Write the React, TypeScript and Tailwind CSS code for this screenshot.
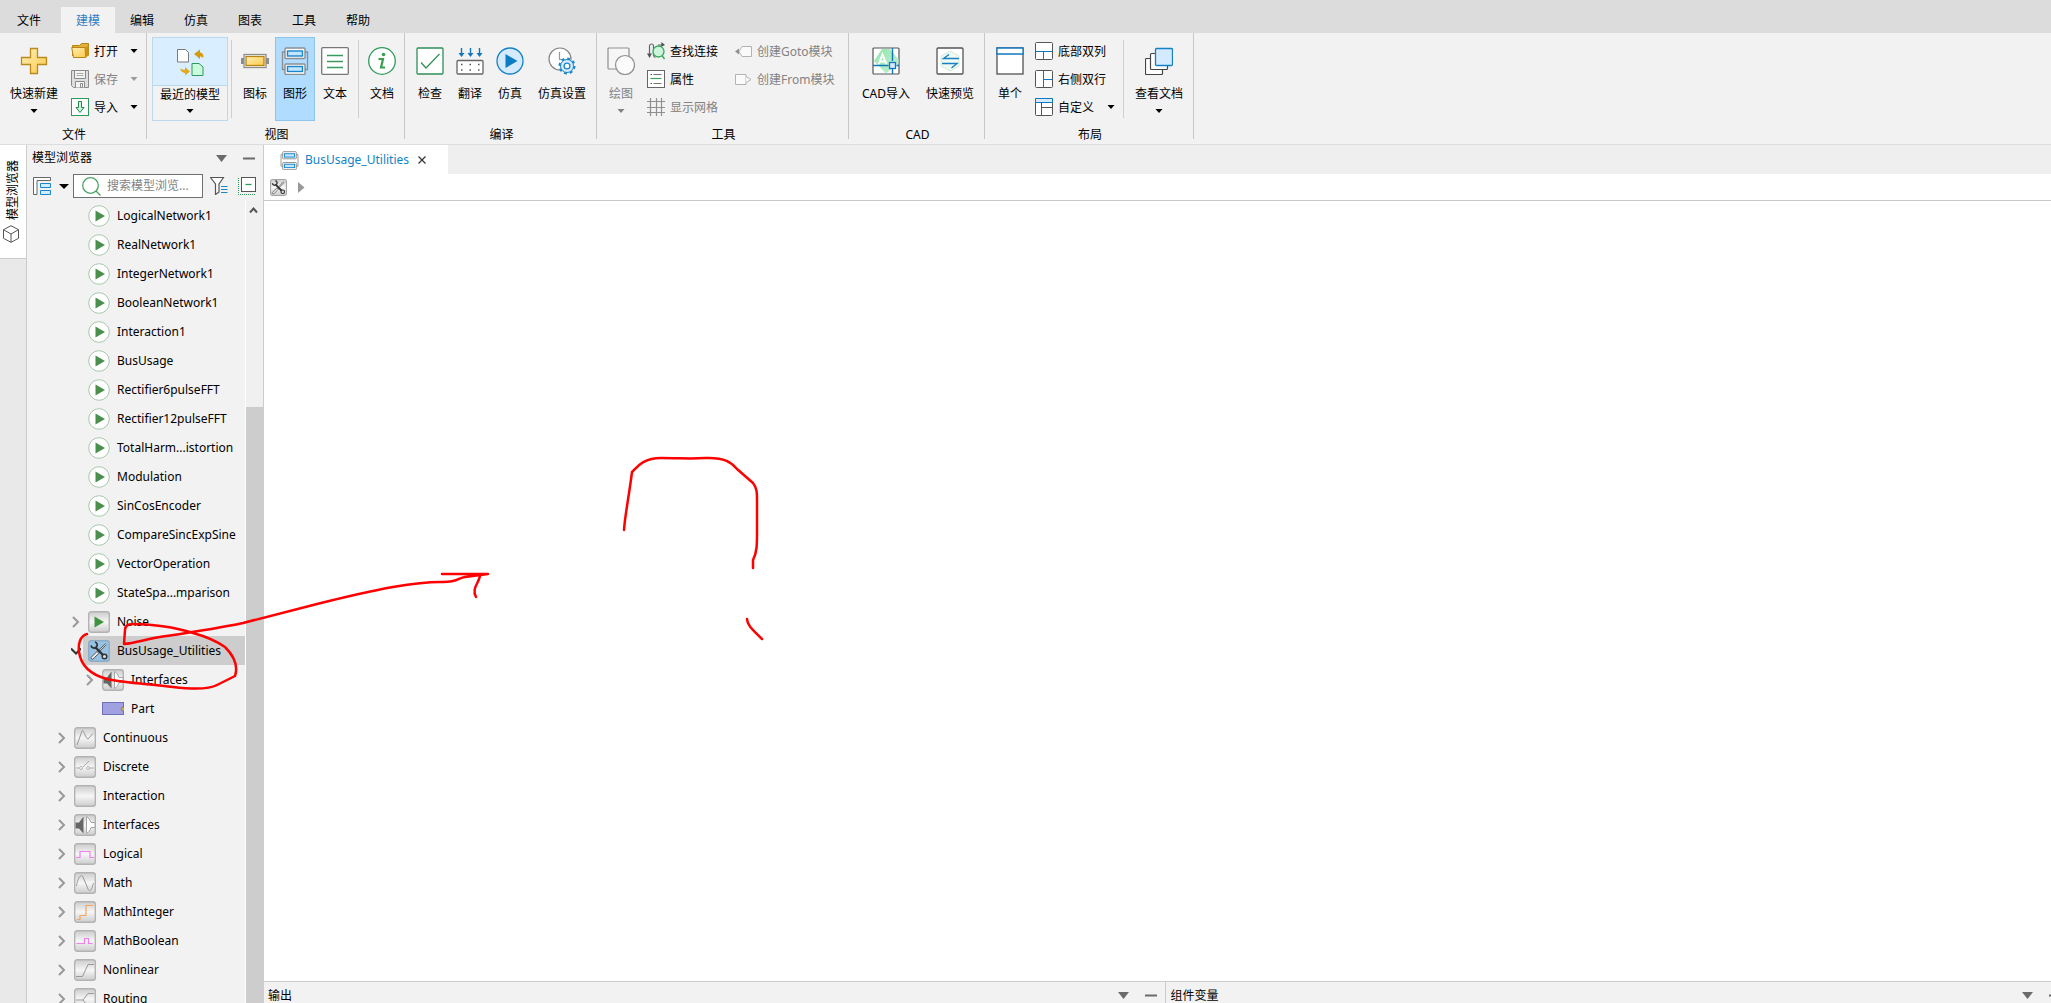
import type { ReactNode } from 'react'

const menus = ['编辑', '仿真', '图表', '工具', '帮助']

type Node = {
  name: string
  level: number
  icon: string
  toggle?: 'open' | 'closed'
  selected?: boolean
}

const examples = [
  'LogicalNetwork1',
  'RealNetwork1',
  'IntegerNetwork1',
  'BooleanNetwork1',
  'Interaction1',
  'BusUsage',
  'Rectifier6pulseFFT',
  'Rectifier12pulseFFT',
  'TotalHarm...istortion',
  'Modulation',
  'SinCosEncoder',
  'CompareSincExpSine',
  'VectorOperation',
  'StateSpa...mparison',
]

const nodes: Node[] = [
  ...examples.map((name) => ({ name, level: 2, icon: 'play' })),
  { name: 'Noise', level: 2, icon: 'playBox', toggle: 'closed' },
  { name: 'BusUsage_Utilities', level: 2, icon: 'tools', toggle: 'open', selected: true },
  { name: 'Interfaces', level: 3, icon: 'interfaces', toggle: 'closed' },
  { name: 'Part', level: 3, icon: 'part' },
  { name: 'Continuous', level: 1, icon: 'continuous', toggle: 'closed' },
  { name: 'Discrete', level: 1, icon: 'discrete', toggle: 'closed' },
  { name: 'Interaction', level: 1, icon: 'blank', toggle: 'closed' },
  { name: 'Interfaces', level: 1, icon: 'interfaces', toggle: 'closed' },
  { name: 'Logical', level: 1, icon: 'logical', toggle: 'closed' },
  { name: 'Math', level: 1, icon: 'math', toggle: 'closed' },
  { name: 'MathInteger', level: 1, icon: 'integer', toggle: 'closed' },
  { name: 'MathBoolean', level: 1, icon: 'boolean', toggle: 'closed' },
  { name: 'Nonlinear', level: 1, icon: 'nonlinear', toggle: 'closed' },
  { name: 'Routing', level: 1, icon: 'routing', toggle: 'closed' },
]

const indent: Record<number, string> = { 1: 'pl-[28px]', 2: 'pl-[42px]', 3: 'pl-[56px]' }

/* ---------- small shared pieces ---------- */

function Caret({ className = 'text-black' }: { className?: string }) {
  return (
    <svg width="8" height="4" viewBox="0 0 8 4" className={`shrink-0 ${className}`}>
      <path d="M0.5 0h7L4 4z" fill="currentColor" />
    </svg>
  )
}

function PanelTools() {
  return (
    <div className="flex items-center gap-4 text-[#6b6b6b]">
      <button aria-label="菜单">
        <svg width="11" height="7" viewBox="0 0 11 7"><path d="M0 0h11L5.5 7z" fill="currentColor" /></svg>
      </button>
      <button aria-label="隐藏">
        <svg width="12" height="7" viewBox="0 0 12 7"><path d="M0 2.5h12v2H0z" fill="currentColor" /></svg>
      </button>
    </div>
  )
}

function Svg({ size = 28, children }: { size?: number; children: ReactNode }) {
  return (
    <svg width={size} height={size} viewBox={`0 0 ${size} ${size}`} fill="none" className="shrink-0">
      {children}
    </svg>
  )
}

/* ---------- ribbon ---------- */

function Group({ title, children }: { title: string; children: ReactNode }) {
  return (
    <section className="flex h-[106px] shrink-0 flex-col border-r border-[#c8c8c8] pl-1 pr-0.5 pt-1">
      <div className="flex h-[84px] shrink-0">{children}</div>
      <h2 className="shrink-0 pt-[6px] text-center leading-4">{title}</h2>
    </section>
  )
}

type BigProps = {
  label: string
  icon: ReactNode
  width?: string
  caret?: boolean
  active?: boolean
  disabled?: boolean
}

function Big({ label, icon, width = 'w-10', caret, active, disabled }: BigProps) {
  return (
    <button
      disabled={disabled}
      className={`flex h-full ${width} flex-col items-center border pt-[9px] ${
        active ? 'border-[#8ec5ee] bg-[#b0dcff]' : 'border-transparent'
      } ${disabled ? 'text-[#838383]' : ''}`}
    >
      {icon}
      <span className="mt-[9px] whitespace-nowrap leading-5">{label}</span>
      {caret && <span className="pt-[5px]"><Caret className={disabled ? 'text-[#838383]' : 'text-black'} /></span>}
    </button>
  )
}

function Small({ label, icon, caret, disabled }: BigProps) {
  return (
    <button
      disabled={disabled}
      className={`flex h-7 items-center gap-[5px] ${disabled ? 'text-[#838383]' : ''}`}
    >
      {icon}
      <span className="whitespace-nowrap pt-[2px]">{label}</span>
      {caret && <span className="ml-auto"><Caret className={disabled ? 'text-[#9a9a9a]' : 'text-black'} /></span>}
    </button>
  )
}

function Rule() {
  return <div className="mx-[3px] my-[3px] w-px bg-[#cfcfcf]" />
}

function Gradients() {
  return (
    <svg width="0" height="0" className="absolute">
      <defs>
        <linearGradient id="gold" x1="0" y1="0" x2="1" y2="1">
          <stop offset="0" stopColor="#fff0b8" />
          <stop offset="1" stopColor="#fcc94c" />
        </linearGradient>
        <linearGradient id="steel" x1="0" y1="0" x2="0" y2="1">
          <stop offset="0" stopColor="#cccccc" />
          <stop offset="0.5" stopColor="#f6f6f6" />
          <stop offset="1" stopColor="#cccccc" />
        </linearGradient>
        <linearGradient id="leaf" x1="0" y1="0" x2="1" y2="1">
          <stop offset="0" stopColor="#8fe6ac" />
          <stop offset="1" stopColor="#c5f0d3" />
        </linearGradient>
      </defs>
    </svg>
  )
}

const PlusIcon = () => (
  <Svg>
    <path d="M10.5 1.5h7v9h9v7h-9v9h-7v-9h-9v-7h9z" fill="url(#gold)" stroke="#b98a1c" strokeWidth="1.3" />
  </Svg>
)

const FolderIcon = () => (
  <Svg size={18}>
    <path d="M1.500 14V3.500h7l2-2h7v12" fill="#e0b03a" stroke="#b98412" />
    <path d="M.7 5.500h13.300l.8 10H2.500z" fill="url(#gold)" stroke="#b98412" />
    <path d="M14.500 5.500 17.500 3v10.500l-2.500 2z" fill="#c89418" />
  </Svg>
)

const SaveIcon = () => (
  <Svg size={18}>
    <path d="M.5.5h17v17h-15l-2-2z" fill="#dedede" stroke="#8a8a8a" />
    <path d="M3.500.500h11v8h-11zM4.500 17.500v-6h9v6" fill="#f4f4f4" stroke="#8a8a8a" />
    <path d="M5.500 3.500h7M5.500 5.500h7" stroke="#aaa" />
    <path d="M9.500 13.500h2v4h-2z" stroke="#8a8a8a" fill="#fff" />
  </Svg>
)

const ImportIcon = () => (
  <Svg size={18}>
    <rect x=".5" y=".5" width="17" height="17" fill="#fff" stroke="#2f9a5b" />
    <path d="M7.500 3.500h3v6h2.500l-4 5-4-5h2.500z" fill="#c9f2d9" stroke="#23884c" />
  </Svg>
)

const RecentIcon = () => (
  <Svg>
    <path d="M1.500 1.500h8l3 3v9.500h-11z" fill="#fff" stroke="#7a7a7a" />
    <path d="M16 15.500h7l4 3.500v8.500H16z" fill="#c9fbdc" stroke="#2f9a5b" />
    <path d="M18 6l6-4.500v3c3 .5 4 3 3 5.500-1-1.500-2-1.500-3-1.500V11z" fill="#d69a0e" />
    <path d="M14 23.500l-5 4v-2.500c-3-.5-5-2.500-4.500-5 1 1.500 2.500 1.800 4.500 1.800V19z" fill="#e5a91a" />
  </Svg>
)

const SymbolIcon = () => (
  <Svg>
    <path d="M0 11h4v6H0zM24 11h4v6h-4z" fill="#8d8d8d" />
    <rect x="3" y="7.500" width="22" height="13" fill="#fff" stroke="#8d8d8d" strokeWidth="1.300" />
    <rect x="5" y="9.500" width="18" height="9" fill="url(#gold)" stroke="#b98412" strokeWidth="1.300" />
  </Svg>
)

function DiagramIcon({ size = 28 }: { size?: number }) {
  return (
    <svg width={size} height={size} viewBox="0 0 28 28" fill="none" className="shrink-0">
      <path d="M5 5H1.500v17.500H5M23 5h3.500v17.500H23" stroke="#8d8d8d" strokeWidth="1.300" />
      <rect x="4" y="1" width="20" height="10.500" rx="1" fill="#fff" stroke="#8d8d8d" strokeWidth="1.400" />
      <rect x="4" y="17" width="20" height="10.500" rx="1" fill="#fff" stroke="#8d8d8d" strokeWidth="1.400" />
      <rect x="6.500" y="4" width="15" height="5" fill="#c4e5ff" stroke="#1787c9" strokeWidth="1.400" />
      <rect x="6.500" y="19.500" width="15" height="5" fill="#c4e5ff" stroke="#1787c9" strokeWidth="1.400" />
    </svg>
  )
}

const TextIcon = () => (
  <Svg>
    <rect x=".7" y=".7" width="26.600" height="26.600" rx="1" fill="#fff" stroke="#777" strokeWidth="1.300" />
    <path d="M6 8.500h16M6 14.500h16M6 20.500h16" stroke="#3a9a5e" strokeWidth="1.300" />
  </Svg>
)

const InfoIcon = () => (
  <Svg>
    <circle cx="14" cy="14" r="13.300" fill="#fff" stroke="#2f9a5b" strokeWidth="1.300" />
    <circle cx="15.500" cy="7.500" r="1.800" fill="#38a04f" />
    <path d="M10.500 12h4.500l-2 8.500h4" stroke="#38a04f" strokeWidth="2.200" />
  </Svg>
)

const CheckIcon = () => (
  <Svg>
    <rect x="1" y="1" width="26" height="26" rx="1" fill="#fff" stroke="#2f8f57" strokeWidth="1.300" />
    <path d="M5 15.500l5 5.500L23.500 7" stroke="#2f8f57" strokeWidth="1.200" />
  </Svg>
)

const TranslateIcon = () => (
  <Svg>
    <path d="M5.500 1v7M14.500 1v7M23.500 1v7" stroke="#1377bd" strokeWidth="1.400" />
    <path d="M2.500 6h6l-3 4zM11.500 6h6l-3 4zM20.500 6h6l-3 4z" fill="#1377bd" />
    <rect x="1" y="13.500" width="26" height="13.500" rx="1" fill="#fff" stroke="#666" strokeWidth="1.300" />
    <path d="M5 17.500h1.500M13.500 17.500h1.500M22 17.500h1.500M5 23h1.500M13.500 23h1.500M22 23h1.500" stroke="#555" strokeWidth="1.500" />
  </Svg>
)

const SimulateIcon = () => (
  <Svg>
    <circle cx="14" cy="14" r="13" fill="#d3eaff" stroke="#1680c4" strokeWidth="1.300" />
    <path d="M9.500 7v14l12-7z" fill="#0b7cc2" />
  </Svg>
)

const SettingsIcon = () => (
  <Svg>
    <circle cx="12" cy="12" r="11" fill="#fff" stroke="#888" strokeWidth="1.200" />
    <path d="M11.500 5v7.500h4" stroke="#999" strokeWidth="1.200" />
    <circle cx="19" cy="19" r="7" fill="#d3eaff" stroke="#1e86c8" strokeWidth="3" strokeDasharray="2.750 2.750" />
    <circle cx="19" cy="19" r="6.500" fill="#d3eaff" stroke="#1e86c8" strokeWidth="1" />
    <circle cx="19" cy="19" r="2.900" fill="#fff" stroke="#1e86c8" strokeWidth="1.300" />
  </Svg>
)

const ShapesIcon = () => (
  <Svg>
    <rect x="1" y="1" width="21" height="21" rx="1" fill="#f6f6f6" stroke="#8f8f8f" strokeWidth="1.200" />
    <circle cx="18" cy="18" r="9.500" fill="#fbfbfb" stroke="#8f8f8f" strokeWidth="1.200" />
  </Svg>
)

const FindIcon = () => (
  <Svg size={18}>
    <path d="M2.500 13V4a2 2 0 0 1 4 0v9a3 3 0 0 0 2 2.500M11 3h4" stroke="#666" strokeWidth="1.200" />
    <path d="M0 11.500h5L2.500 16zM14.500 0l3.500 3-4 2z" fill="#555" />
    <circle cx="11.500" cy="9.500" r="5.500" fill="#ccf5da" stroke="#36a85f" strokeWidth="1.300" />
    <path d="M15 13.500l2.500 3.500" stroke="#36a85f" strokeWidth="1.300" />
  </Svg>
)

const PropsIcon = () => (
  <Svg size={18}>
    <rect x=".5" y=".5" width="17" height="17" fill="#fff" stroke="#666" />
    <path d="M6.500 4.500h8M6.500 13.500h8" stroke="#777" />
    <path d="M3.500 4.500h1.500M3.500 13.500h1.500" stroke="#555" />
    <path d="M3.500 8.500h11" stroke="#3aa35f" strokeWidth="1.200" />
  </Svg>
)

const GridIcon = () => (
  <Svg size={18}>
    <path d="M3.500 0v18M9.500 0v18M14.500 0v18M0 3.500h18M0 9.500h18M0 14.500h18" stroke="#8f8f8f" strokeWidth="1.200" />
  </Svg>
)

const GotoIcon = () => (
  <Svg size={17}>
    <path d="M7 3.500h9.500v10H7L4 8.500z" fill="#fafafa" stroke="#b3b3b3" />
    <path d="M0 8.500 4 5.500v6z" fill="#8f8f8f" />
  </Svg>
)

const FromIcon = () => (
  <Svg size={17}>
    <path d="M.5 3.500H11v10H.5z" fill="#fafafa" stroke="#b3b3b3" />
    <path d="M11 5.500l5 3-5 3" fill="#fafafa" stroke="#b3b3b3" />
  </Svg>
)

const CadIcon = () => (
  <Svg>
    <rect x="1" y="1" width="26" height="26" rx="1" fill="#fff" stroke="#555" strokeWidth="1.200" />
    <path d="M10 2h8l8.500 10.500v4L14 26.500 2 14z" fill="url(#leaf)" />
    <path d="M6.500 17.500l4-10 4 10M8 14.500h5" stroke="#fff" strokeWidth="2" />
    <path d="M20.500 1v13M20.500 22v5M1 18.500h15.500M24.500 18.500H27" stroke="#1377bd" strokeWidth="1.400" />
    <rect x="17.500" y="15.500" width="6" height="6" fill="#d3eaff" stroke="#1377bd" strokeWidth="1.300" />
  </Svg>
)

const PreviewIcon = () => (
  <Svg>
    <rect x="1" y="1" width="26" height="26" rx="1" fill="#fff" stroke="#555" strokeWidth="1.300" />
    <path d="M14 4l9 5v10l-9 5-9-5V9z" fill="#effaf2" stroke="#d4ecdb" />
    <path d="M23 11.500H7.500l5.500-4M6 16.500h15l-5.500 4.500" stroke="#1680c4" strokeWidth="1.400" />
  </Svg>
)

const SingleIcon = () => (
  <Svg>
    <rect x="1" y="1" width="26" height="26" fill="#fff" stroke="#444" strokeWidth="1.200" />
    <path d="M1 7V1h26v6z" fill="#fff" stroke="#1377bd" strokeWidth="1.300" />
  </Svg>
)

const BottomIcon = () => (
  <Svg size={18}>
    <rect x=".5" y=".5" width="17" height="17" rx="1" fill="#fff" stroke="#555" />
    <path d="M.5 9.500h17M8.500 9.500v8" stroke="#1377bd" />
  </Svg>
)

const RightIcon = () => (
  <Svg size={18}>
    <rect x=".5" y=".5" width="17" height="17" rx="1" fill="#fff" stroke="#555" />
    <path d="M8.500 .5v17M8.500 9.500h9" stroke="#1377bd" />
  </Svg>
)

const CustomIcon = () => (
  <Svg size={18}>
    <rect x=".5" y=".5" width="17" height="17" rx="1" fill="#fff" stroke="#555" />
    <path d="M6.500 5v12.500M6.500 9.500h11" stroke="#555" />
    <path d="M.5.5h17v4H.5z" fill="#d3eaff" stroke="#1377bd" />
  </Svg>
)

const DocsIcon = () => (
  <Svg>
    <rect x=".5" y="11.500" width="17" height="16" rx="1" fill="#fff" stroke="#444" strokeWidth="1.200" />
    <rect x="5.500" y="6.500" width="17" height="16" rx="1" fill="#fff" stroke="#444" strokeWidth="1.200" />
    <rect x="10.500" y="1.500" width="17" height="17" rx="1" fill="#d3eaff" stroke="#1680c4" strokeWidth="1.300" />
  </Svg>
)

function Ribbon() {
  return (
    <div className="flex h-[112px] shrink-0 border-b border-[#dddddd] bg-[#f2f2f2]">
      <Group title="文件">
        <Big label="快速新建" width="w-[60px]" icon={<PlusIcon />} caret />
        <div className="ml-[7px] mr-[6px] flex w-[67px] flex-col">
          <Small label="打开" icon={<FolderIcon />} caret />
          <Small label="保存" icon={<SaveIcon />} caret disabled />
          <Small label="导入" icon={<ImportIcon />} caret />
        </div>
      </Group>

      <Group title="视图">
        <button className="ml-px flex w-[76px] flex-col border border-[#bcd8ec]">
          <span className="flex h-12 w-full items-center justify-center border-b border-[#bcd8ec] bg-[#d9eeff]">
            <RecentIcon />
          </span>
          <span className="flex w-full flex-col items-center whitespace-nowrap pt-px leading-4">
            最近的模型
            <span className="pt-[6px]"><Caret /></span>
          </span>
        </button>
        <Rule />
        <Big label="图标" icon={<SymbolIcon />} />
        <Big label="图形" icon={<DiagramIcon />} active />
        <Big label="文本" icon={<TextIcon />} />
        <Rule />
        <Big label="文档" icon={<InfoIcon />} />
      </Group>

      <Group title="编译">
        <div className="w-px" />
        <Big label="检查" icon={<CheckIcon />} />
        <Big label="翻译" icon={<TranslateIcon />} />
        <Big label="仿真" icon={<SimulateIcon />} />
        <Big label="仿真设置" width="w-16" icon={<SettingsIcon />} />
      </Group>

      <Group title="工具">
        <Big label="绘图" icon={<ShapesIcon />} caret disabled />
        <div className="ml-[6px] flex w-[88px] flex-col">
          <Small label="查找连接" icon={<FindIcon />} />
          <Small label="属性" icon={<PropsIcon />} />
          <Small label="显示网格" icon={<GridIcon />} disabled />
        </div>
        <div className="flex w-[111px] flex-col">
          <Small label="创建Goto模块" icon={<GotoIcon />} disabled />
          <Small label="创建From模块" icon={<FromIcon />} disabled />
        </div>
      </Group>

      <Group title="CAD">
        <div className="w-px" />
        <Big label="CAD导入" width="w-16" icon={<CadIcon />} />
        <Big label="快速预览" width="w-16" icon={<PreviewIcon />} />
      </Group>

      <Group title="布局">
        <div className="w-px" />
        <Big label="单个" icon={<SingleIcon />} />
        <div className="mx-[5px] flex w-20 flex-col">
          <Small label="底部双列" icon={<BottomIcon />} />
          <Small label="右侧双行" icon={<RightIcon />} />
          <Small label="自定义" icon={<CustomIcon />} caret />
        </div>
        <Rule />
        <Big label="查看文档" width="w-16" icon={<DocsIcon />} caret />
      </Group>
    </div>
  )
}

/* ---------- model browser ---------- */

/* crossed spanner and screwdriver */
const Tools = () => (
  <>
    <path d="M10.500 11.500 18 4" stroke="#555" strokeWidth="1.800" />
    <path d="M11 11 18 4" stroke="#fff" strokeWidth=".7" />
    <path d="M3 17.500l6-6 1.800 1.800-6 6q-1.500.5-1.800-1.800z" fill="#eee" stroke="#444" strokeWidth=".9" />
    <path d="M7 7l8.500 8.500" stroke="#333" strokeWidth="2.400" />
    <path d="M3 5.500a3.200 3.200 0 0 0 5.500 1.500 3.200 3.200 0 0 0-1.500-5" stroke="#333" strokeWidth="1.700" />
    <circle cx="16.500" cy="16.500" r="2.300" fill="#d5e2ec" stroke="#333" strokeWidth="1.500" />
  </>
)

const glyphs: Record<string, ReactNode> = {
  blank: null,
  playBox: <path d="M6.500 5.500v11l9.500-5.500z" fill="#3f9440" />,
  tools: <Tools />,
  interfaces: (
    <>
      <path d="M1.500 8.500H5l4.500-6v17L5 14.500H1.500z" fill="#666" />
      <path d="M12.500 2.500c2 1 3.500 3.500 4.500 6h4v5h-4c-1 3-2.500 5-4.500 6z" fill="#fff" stroke="#a5a5a5" />
    </>
  ),
  continuous: <path d="M3 18 8 4c1-2 2 2 4.500 7l1.500 1 5-5.500" stroke="#999" />,
  discrete: <path d="M2 12h3M9 11l6-6M15 12h5M7 10.500a1.500 1.500 0 1 0 .1 0M14 10.500a1.500 1.500 0 1 0 .1 0" stroke="#aaa" />,
  logical: <path d="M2 14.500h4v-6h10v6h4" stroke="#f280f0" strokeWidth="1.200" />,
  math: <path d="M2.500 14C4 4 7.500 2 9 5l5 12c2 4 4 0 5.500-6" stroke="#999" />,
  integer: <path d="M3 18.500h3v-4h6v-10h7" stroke="#f0a860" strokeWidth="1.200" />,
  boolean: <path d="M2.500 13.500h8v-5h4v5h4" stroke="#f280f0" strokeWidth="1.200" />,
  nonlinear: <path d="M2 17.500h6.500L14 5.500h6" stroke="#999" />,
  routing: <path d="M2 12h7l5-6.500h6M9 12l5 6.500h6" stroke="#999" />,
}

function NodeIcon({ icon, blue }: { icon: string; blue?: boolean }) {
  if (icon === 'play') {
    return (
      <Svg size={22}>
        <circle cx="11" cy="11" r="10.300" fill="#fff" stroke="#a9c9ad" />
        <path d="M7.500 5.500v11l9.500-5.500z" fill="#4a8f4c" />
      </Svg>
    )
  }
  if (icon === 'part') {
    return (
      <Svg size={22}>
        <rect x=".5" y="4.500" width="21" height="12" fill="#a1a1e2" stroke="#6f6fbb" />
        <circle cx="21" cy="11" r="2" fill="#c9a94f" stroke="#777" strokeWidth=".7" />
      </Svg>
    )
  }
  return (
    <Svg size={22}>
      <rect x=".7" y=".7" width="20.600" height="20.600" rx="2.500" fill={blue ? '#97c2e3' : 'url(#steel)'} stroke={blue ? '#8cabc4' : '#b3b3b3'} strokeWidth="1.400" />
      {glyphs[icon]}
    </Svg>
  )
}

function TreeRow({ node }: { node: Node }) {
  return (
    <li className={`flex h-[29px] items-center ${indent[node.level]}`}>
      <span className="flex w-[14px] shrink-0 justify-center">
        {node.toggle && (
          <button aria-label={node.name}>
            <svg width="10" height="12" viewBox="0 0 10 12" fill="none">
              {node.toggle === 'open' ? (
                <path d="M0 3.500l5 5 5-5" stroke="#333" strokeWidth="2" />
              ) : (
                <path d="M2 1l5 5-5 5" stroke="#999" strokeWidth="2" />
              )}
            </svg>
          </button>
        )}
      </span>
      <button className={`flex h-full flex-1 items-center gap-[7px] pl-[5px] text-left ${node.selected ? 'bg-[#cdcdcd]' : ''}`}>
        <NodeIcon icon={node.icon} blue={node.selected} />
        <span className="whitespace-nowrap">{node.name}</span>
      </button>
    </li>
  )
}

function Browser() {
  return (
    <aside className="flex w-[238px] shrink-0 flex-col border-x border-[#cccccc] bg-[#f2f2f2]">
      <header className="flex h-[26px] shrink-0 items-center justify-between pl-[5px] pr-2">
        <h2>模型浏览器</h2>
        <PanelTools />
      </header>

      <div className="flex h-[30px] shrink-0 items-center pl-[6px]">
        <button aria-label="视图" className="flex items-center gap-2">
          <Svg size={18}>
            <path d="M.5.5h17v3H4v14H.5z" fill="#fff" stroke="#666" />
            <path d="M7.500 6.500h10v4h-10zM7.500 13.500h10v4h-10z" fill="#d3eaff" stroke="#1787c9" />
          </Svg>
          <svg width="10" height="5" viewBox="0 0 10 5"><path d="M0 0h10L5 5z" /></svg>
        </button>
        <label className="ml-1 flex h-6 w-[130px] items-center border border-[#707070] bg-white pl-2">
          <Svg size={19}>
            <circle cx="8.500" cy="8.500" r="7.800" stroke="#4ba267" strokeWidth="1.300" />
            <path d="M14 14l4.500 4.500" stroke="#4ba267" strokeWidth="1.300" />
          </Svg>
          <input
            aria-label="搜索"
            placeholder="搜索模型浏览..."
            className="ml-[6px] w-[92px] outline-none placeholder:text-[#838383]"
          />
        </label>
        <button aria-label="过滤" className="ml-[7px]">
          <Svg size={18}>
            <path d="M.5.500h13L9 7v8l-3.500 2.500V7z" fill="#fff" stroke="#555" strokeWidth="1.200" />
            <path d="M11 9.500h6.500M11 12.500h6.500M11 15.500h6.500" stroke="#1787c9" />
          </Svg>
        </button>
        <button aria-label="全部折叠" className="ml-[10px]">
          <Svg size={18}>
            <path d="M.5 1v16.500H18" stroke="#2f9a5b" strokeDasharray="1 1" />
            <rect x="3.500" y=".5" width="14" height="14" fill="#fff" stroke="#555" />
            <path d="M7.500 7.500h6" stroke="#2f9a5b" strokeWidth="1.300" />
          </Svg>
        </button>
      </div>

      <div className="flex min-h-0 flex-1">
        <ul className="min-w-0 flex-1 overflow-hidden">
          {nodes.map((n, i) => (
            <TreeRow key={i} node={n} />
          ))}
        </ul>
        {/* scrollbar */}
        <div className="flex w-[18px] flex-col border-l border-white bg-[#f0f0f0]">
          <svg width="17" height="17" viewBox="0 0 17 17" fill="none" className="shrink-0">
            <path d="M4 11.500l3.500-4 3.500 4" stroke="#555" strokeWidth="2" />
          </svg>
          <div className="mt-[189px] flex-1 bg-[#cdcdcd]" />
        </div>
      </div>
    </aside>
  )
}

/* ---------- document area ---------- */

function Workspace() {
  return (
    <main className="flex min-w-0 flex-1 flex-col bg-white">
      <div className="flex h-[29px] shrink-0 bg-[#efefef]">
        <div className="flex w-[184px] items-center bg-white pl-4 pt-px text-[#1283c8]">
          <DiagramIcon size={19} />
          <span className="ml-[6px]">BusUsage_Utilities</span>
          <button aria-label="关闭" className="ml-[9px]">
            <svg width="8" height="8" viewBox="0 0 8 8"><path d="M.5.5l7 7M7.500.500l-7 7" stroke="#333" strokeWidth="1.200" /></svg>
          </button>
        </div>
      </div>
      <nav className="flex h-[27px] shrink-0 items-center gap-[11px] border-b border-[#c8c8c8] pl-[6px]">
        <svg width="17" height="17" viewBox="0 0 22 22" fill="none">
          <rect x=".7" y=".7" width="20.600" height="20.600" rx="2.500" fill="url(#steel)" stroke="#a5a5a5" strokeWidth="1.400" />
          <Tools />
        </svg>
        <svg width="7" height="11" viewBox="0 0 7 11"><path d="M0 0v11l6.500-5.500z" fill="#999" /></svg>
      </nav>

      <div className="flex-1" />

      <div className="flex h-[22px] shrink-0 overflow-hidden border-t border-[#cccccc] bg-[#f2f2f2]">
        <section className="flex w-[50.5%] items-center justify-between border-r border-[#cccccc] pl-1 pr-2 pt-[6px]">
          <h2>输出</h2>
          <PanelTools />
        </section>
        <section className="-mr-[10px] flex flex-1 items-center justify-between pl-1 pt-[6px]">
          <h2>组件变量</h2>
          <PanelTools />
        </section>
      </div>
    </main>
  )
}

/* freehand pen strokes over the window */
function PenStrokes() {
  return (
    <svg className="pointer-events-none absolute left-0 top-0 h-[700px] w-[800px]" viewBox="0 0 800 700" fill="none" stroke="#f00" strokeWidth="2.500" strokeLinecap="round" strokeLinejoin="round">
      <path d="M87 634C80 636 78 644 79 652C81 666 92 675 107 679C125 683 150 684 173 687C190 689 208 690 217 685L235 676C238 667 235 657 225 647C215 640 204 636 193 633C175 627 150 624 133 624C127 624 125 626 125 630L124 644C135 643 147 639 160 637C180 634 215 629 243 623C262 618 290 611 317 604C345 597 365 592 393 587C405 585 425 582 440 582C457 583 458 578 465 577L488 574H442" />
      <path d="M480 575C480 582 471 588 476 597" />
      <path d="M624 530C625 515 629 496 632 472C637 467 643 458 661 458C680 458 690 459 705 458C725 457 732 463 737 469L753 483C757 488 757 493 757 500V533C757 545 757 552 753 560V568" />
      <path d="M747 619C747 625 753 630 762 639" />
    </svg>
  )
}

export default function App() {
  return (
    <div className="relative flex h-screen flex-col overflow-hidden bg-[#f2f2f2] font-['Noto_Sans','Noto_Sans_CJK_SC',sans-serif] text-[12px] leading-4 text-black">
      <Gradients />
      <nav className="flex h-[33px] shrink-0 bg-[#dcdcdc] pt-[7px]">
        <button className="w-[58px] pt-[2px]">文件</button>
        <button className="ml-[3px] w-[54px] bg-[#f2f2f2] pt-[2px] text-[#2f7fc4]">建模</button>
        {menus.map((m) => (
          <button key={m} className="w-[54px] pt-[2px]">{m}</button>
        ))}
      </nav>

      <Ribbon />

      <div className="flex min-h-0 flex-1">
        <div className="w-[26px] shrink-0 bg-[#e9e9e9]">
          <button className="flex h-[114px] w-full flex-col items-center border-b border-[#cccccc] bg-white pt-[15px]">
            <span className="rotate-180 [text-orientation:sideways] [writing-mode:vertical-rl]">模型浏览器</span>
            <svg width="18" height="18" viewBox="0 0 18 18" fill="none" className="mr-1 mt-[5px]" stroke="#555">
              <path d="M9 .7l7.500 4v8.600L9 17.300l-7.500-4V4.700zM1.500 4.700 9 9l7.500-4.300M9 9v8.300" />
            </svg>
          </button>
        </div>
        <Browser />
        <Workspace />
      </div>

      <PenStrokes />
    </div>
  )
}
